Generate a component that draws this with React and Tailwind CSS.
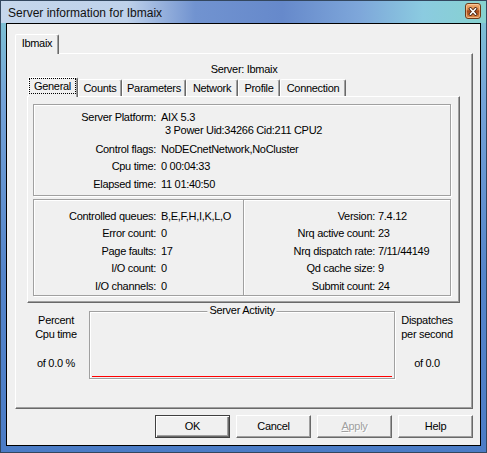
import React from "react";

function CloseButton() {
  return (
    <div className="mt-[2px] w-[16px] h-[16px] rounded-[3px] border border-[#6e3a18] bg-[linear-gradient(180deg,#f0b27a_0%,#e08a48_38%,#a4481a_50%,#c0642a_72%,#e49656_100%)] shadow-[inset_0_0_0_1px_rgba(255,220,180,0.55)] flex items-center justify-center">
      <svg width="10" height="9" viewBox="0 0 10 9">
        <path d="M2.5 1.8 L7.5 7.2 M7.5 1.8 L2.5 7.2" stroke="#4a2410" strokeWidth="3.2" strokeLinecap="square" />
        <path d="M2.5 1.8 L7.5 7.2 M7.5 1.8 L2.5 7.2" stroke="#ffffff" strokeWidth="1.6" strokeLinecap="square" />
      </svg>
    </div>
  );
}

function Row({ label, value, lw, vp }) {
  return (
    <div className="flex items-center h-[17.5px] whitespace-nowrap">
      <div className={lw + " text-right"}>{label}</div>
      <div className={vp}>{value}</div>
    </div>
  );
}

function Tab({ children, w }) {
  return (
    <div className={w + " h-[17px] bg-[#f0f0f0] border-t border-l border-white border-r border-r-[#696969] rounded-t-[2px] shadow-[inset_-1px_0_0_#a0a0a0] flex items-center justify-center whitespace-nowrap"}>
      {children}
    </div>
  );
}

function Button({ children, def, disabled }) {
  const base = "w-[75px] h-[23px] bg-[#f0f0f0] flex items-center justify-center ";
  const cls = def
    ? base + "border border-[#404040] shadow-[inset_1px_1px_0_#fff,inset_-1px_-1px_0_#696969,inset_-2px_-2px_0_#a0a0a0]"
    : base + "border border-t-white border-l-white border-r-[#696969] border-b-[#696969] shadow-[inset_-1px_-1px_0_#a0a0a0]";
  return (
    <div className={cls}>
      <span className={disabled ? "text-[#a0a0a0] [text-shadow:1px_1px_0_#ffffff]" : ""}>{children}</span>
    </div>
  );
}

export default function App() {
  return (
    <div className="w-[487px] h-[453px] flex flex-col border border-[#33475f] bg-[linear-gradient(180deg,#80c8d4_0%,#74a3d8_22%,#5585ca_60%,#4b7cc6_100%)] font-['Liberation_Sans',Arial,sans-serif] text-[11px] tracking-[-0.3px] text-black overflow-hidden">
      {/* Title bar */}
      <div className="h-[22px] flex items-start justify-between pl-[7px] pr-[5px] bg-[linear-gradient(90deg,#c6d7ec_0%,#bed1ea_26%,#7193d0_40%,#6689cb_58%,#7ea7da_74%,#8bcbe0_87%,#86d2cf_100%)]">
        <span className="text-[12px] tracking-normal leading-[14px] mt-[5px] text-[#111]">Server information for Ibmaix</span>
        <CloseButton />
      </div>

      {/* Client area */}
      <div className="mx-[5px] h-[423px] border border-black bg-[#f0f0f0] flex flex-col">
        <div className="ml-[8px] mt-[10px] w-[458px] flex flex-col">
          {/* outer tab strip */}
          <div className="h-[19px] flex items-end">
            <div className="relative z-10 -mb-px h-[20px] w-[44px] bg-[#f0f0f0] border-t border-l border-white border-r border-r-[#696969] rounded-t-[2px] shadow-[inset_-1px_0_0_#a0a0a0] flex justify-center pt-[2px] leading-[13px]">
              Ibmaix
            </div>
          </div>

          {/* outer panel */}
          <div className="h-[356px] border border-t-white border-l-white border-r-[#696969] border-b-[#696969] shadow-[inset_-1px_-1px_0_#a0a0a0] flex flex-col">
            <div className="h-[14px] mt-[8px] leading-[14px] text-center">Server: Ibmaix</div>

            {/* inner tab control */}
            <div className="ml-[11px] mt-[1px] w-[433px] flex flex-col">
              <div className="h-[19px] flex items-end pl-[1px]">
                <div className="relative z-10 -mb-px h-[20px] w-[50px] bg-[#f0f0f0] border-t border-l border-white border-r border-r-[#696969] rounded-t-[2px] shadow-[inset_-1px_0_0_#a0a0a0] pr-[1px]">
                  <div className="h-[16px] border border-dotted border-black flex items-center justify-center">General</div>
                </div>
                <Tab w="w-[44px]">Counts</Tab>
                <Tab w="w-[64px]">Parameters</Tab>
                <Tab w="w-[52px]">Network</Tab>
                <Tab w="w-[42px]">Profile</Tab>
                <Tab w="w-[66px]">Connection</Tab>
              </div>

              <div className="h-[207px] border border-t-white border-l-white border-r-[#696969] border-b-[#696969] shadow-[inset_-1px_-1px_0_#a0a0a0] flex flex-col">
                {/* box 1 */}
                <div className="ml-[5px] mt-[7px] w-[418px] h-[92px] border border-[#a0a0a0] shadow-[inset_1px_1px_0_#fff,1px_1px_0_#fff] flex flex-col pt-[6px]">
                  <div className="flex items-center h-[13px] whitespace-nowrap">
                    <div className="w-[122px] text-right">Server Platform:</div>
                    <div className="pl-[5px]">AIX 5.3</div>
                  </div>
                  <div className="flex items-center h-[13px] whitespace-nowrap">
                    <div className="pl-[131px]">3 Power Uid:34266 Cid:211 CPU2</div>
                  </div>
                  <div className="mt-[3px]">
                    <Row label="Control flags:" value="NoDECnetNetwork,NoCluster" lw="w-[122px]" vp="pl-[5px]" />
                    <Row label="Cpu time:" value="0 00:04:33" lw="w-[122px]" vp="pl-[5px]" />
                    <Row label="Elapsed time:" value="11 01:40:50" lw="w-[122px]" vp="pl-[5px]" />
                  </div>
                </div>

                {/* box 2 */}
                <div className="ml-[5px] mt-[3px] w-[418px] h-[97px] border border-[#a0a0a0] shadow-[inset_1px_1px_0_#fff,1px_1px_0_#fff] flex">
                  <div className="w-[209px] pt-[7px]">
                    <Row label="Controlled queues:" value="B,E,F,H,I,K,L,O" lw="w-[122px]" vp="pl-[5px]" />
                    <Row label="Error count:" value="0" lw="w-[122px]" vp="pl-[5px]" />
                    <Row label="Page faults:" value="17" lw="w-[122px]" vp="pl-[5px]" />
                    <Row label="I/O count:" value="0" lw="w-[122px]" vp="pl-[5px]" />
                    <Row label="I/O channels:" value="0" lw="w-[122px]" vp="pl-[5px]" />
                  </div>
                  <div className="flex-1 border-l border-l-[#a0a0a0] shadow-[inset_1px_0_0_#fff] pt-[7px]">
                    <Row label="Version:" value="7.4.12" lw="w-[131px]" vp="pl-[3px]" />
                    <Row label="Nrq active count:" value="23" lw="w-[131px]" vp="pl-[3px]" />
                    <Row label="Nrq dispatch rate:" value="7/11/44149" lw="w-[131px]" vp="pl-[3px]" />
                    <Row label="Qd cache size:" value="9" lw="w-[131px]" vp="pl-[3px]" />
                    <Row label="Submit count:" value="24" lw="w-[131px]" vp="pl-[3px]" />
                  </div>
                </div>
              </div>
            </div>

            {/* activity area */}
            <div className="mt-[8px] flex items-start">
              <div className="w-[73px] pl-[7px] pt-[3px] text-center leading-[13.5px]">
                <div>Percent</div>
                <div>Cpu time</div>
                <div className="mt-[16px]">of 0.0 %</div>
              </div>
              <div className="relative w-[306px] h-[68px] border border-[#a0a0a0] shadow-[inset_1px_1px_0_#fff,1px_1px_0_#fff] flex flex-col justify-end">
                <div className="absolute top-[-8px] left-1/2 -translate-x-1/2 bg-[#f0f0f0] px-[2px] leading-[13px] whitespace-nowrap">Server Activity</div>
                <div className="h-px mx-[2px] mb-[1px] bg-[#ff0000]" />
              </div>
              <div className="flex-1 pr-[13px] pt-[3px] text-center leading-[13.5px]">
                <div>Dispatches</div>
                <div>per second</div>
                <div className="mt-[16px]">of 0.0</div>
              </div>
            </div>
          </div>

          {/* buttons */}
          <div className="mt-[6px] flex justify-end gap-[6px]">
            <Button def>OK</Button>
            <Button>Cancel</Button>
            <Button disabled><span className="underline">A</span>pply</Button>
            <Button>Help</Button>
          </div>
        </div>
      </div>
    </div>
  );
}
